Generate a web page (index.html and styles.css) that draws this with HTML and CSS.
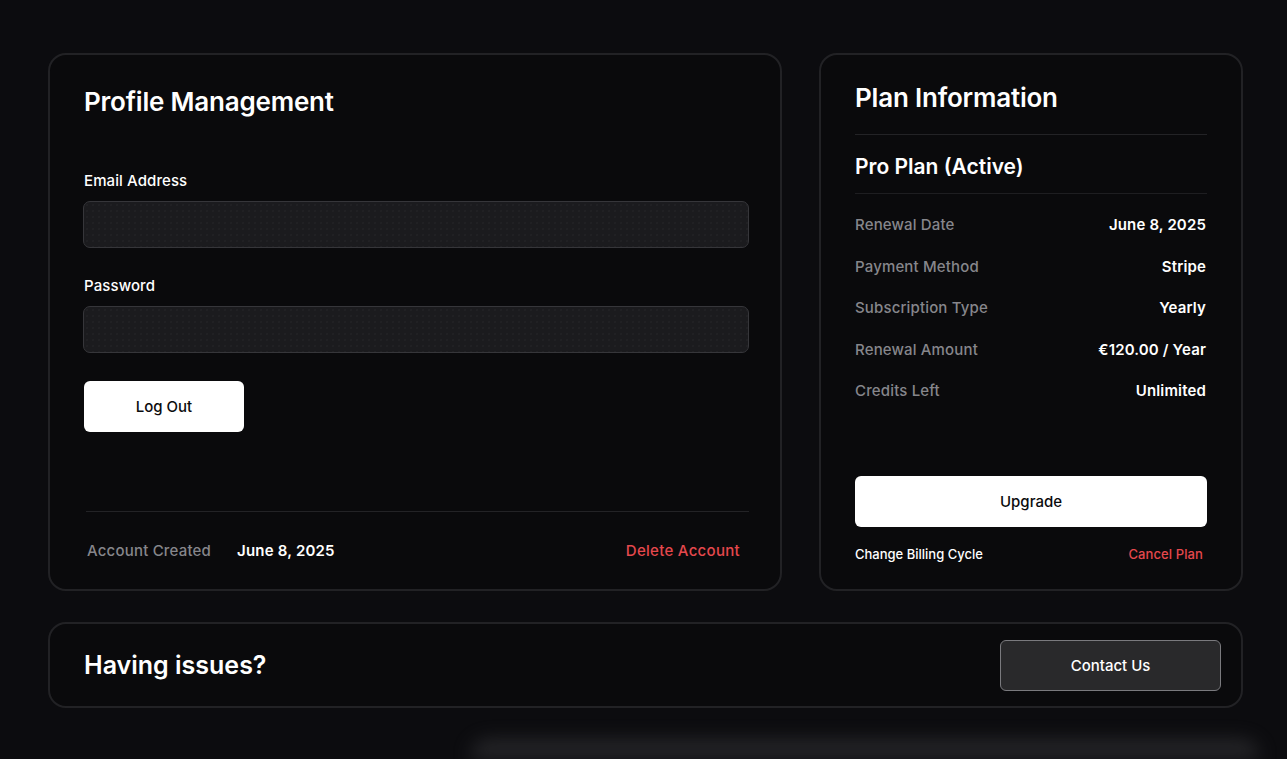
FILE: index.html
```html
<!DOCTYPE html>
<html lang="en">
<head>
<meta charset="utf-8">
<title>Account Settings</title>
<link rel="stylesheet" href="styles.css">
</head>
<body>
<div class="backdrop"></div>
<main class="page">
  <div class="top-row">
    <section class="card profile">
      <h1 class="card-title">Profile Management</h1>
      <form class="profile-form">
        <label class="field">
          <span class="field-label">Email Address</span>
          <input class="field-input" type="email">
        </label>
        <label class="field">
          <span class="field-label">Password</span>
          <input class="field-input" type="password">
        </label>
        <button type="button" class="btn btn-light logout">Log Out</button>
      </form>
      <div class="profile-footer">
        <div class="created">
          <span class="muted">Account Created</span>
          <span class="strong">June 8, 2025</span>
        </div>
        <a class="danger-link" href="#">Delete Account</a>
      </div>
    </section>

    <section class="card plan">
      <h2 class="card-title plan-title">Plan Information</h2>
      <div class="plan-name">Pro Plan (Active)</div>
      <dl class="plan-rows">
        <div class="plan-row"><dt>Renewal Date</dt><dd>June 8, 2025</dd></div>
        <div class="plan-row"><dt>Payment Method</dt><dd>Stripe</dd></div>
        <div class="plan-row"><dt>Subscription Type</dt><dd>Yearly</dd></div>
        <div class="plan-row"><dt>Renewal Amount</dt><dd>€120.00 / Year</dd></div>
        <div class="plan-row"><dt>Credits Left</dt><dd>Unlimited</dd></div>
      </dl>
      <button type="button" class="btn btn-light upgrade">Upgrade</button>
      <div class="plan-links">
        <a class="plain-link" href="#">Change Billing Cycle</a>
        <a class="danger-link small" href="#">Cancel Plan</a>
      </div>
    </section>
  </div>

  <section class="card support">
    <h2 class="support-title">Having issues?</h2>
    <button type="button" class="btn btn-dark">Contact Us</button>
  </section>
</main>
</body>
</html>
```

FILE: styles.css
```css
* {
  box-sizing: border-box;
}

html, body {
  height: 100%;
}

body {
  margin: 0;
  background: #0c0c0f;
  color: #ffffff;
  font-family: Inter, "Noto Sans", "Liberation Sans", sans-serif;
  overflow: hidden;
  position: relative;
}

/* soft blurred panel glowing under the page content */
.backdrop {
  position: absolute;
  left: 470px;
  bottom: 0;
  width: 790px;
  height: 20px;
  border-radius: 24px 24px 0 0;
  background: #2a2a2d;
  filter: blur(9px);
  opacity: 0.85;
}

.page {
  position: relative;
  padding: 53px 44px 0 48px;
  display: flex;
  flex-direction: column;
  gap: 31px;
}

.top-row {
  display: grid;
  grid-template-columns: 734px 424px;
  gap: 37px;
  height: 538px;
}

.card {
  background: #0a0a0c;
  border: 2px solid #222225;
  border-radius: 18px;
}

.card-title {
  margin: 0;
  font-size: 26px;
  font-weight: 600;
  letter-spacing: -0.2px;
  line-height: 32px;
}

/* profile card */
.profile {
  display: flex;
  flex-direction: column;
  padding: 31px 31px 0 34px;
}

.profile-form {
  display: flex;
  flex-direction: column;
  margin-top: 54px;
}

.field {
  display: flex;
  flex-direction: column;
  gap: 11px;
  margin-bottom: 29px;
}

.field-label {
  font-size: 15px;
  font-weight: 500;
  line-height: 18px;
  letter-spacing: 0.1px;
}

.field-input {
  height: 47px;
  margin-left: -1px;
  background-color: #1b1b1e;
  background-image: radial-gradient(circle, #26262a 0.6px, transparent 0.8px);
  background-size: 6px 6px;
  border: 1px solid #36363a;
  border-radius: 7px;
  color: #fff;
  font: inherit;
  outline: none;
}

.btn {
  font-family: inherit;
  font-size: 15px;
  font-weight: 500;
  border-radius: 6px;
  cursor: pointer;
}

.btn-light {
  background: #ffffff;
  color: #0b0b0d;
  border: none;
}

.logout {
  width: 160px;
  height: 51px;
  margin-top: -1px;
}

.profile-footer {
  margin-top: auto;
  margin-left: 2px;
  border-top: 1px solid #232326;
  height: 78px;
  display: flex;
  align-items: center;
  justify-content: space-between;
  padding: 0 9px 0 1px;
}

.created {
  display: flex;
  gap: 26px;
  font-size: 15px;
  letter-spacing: 0.2px;
}

.muted {
  color: #86868b;
  font-weight: 500;
}

.strong {
  color: #ffffff;
  font-weight: 600;
}

.danger-link {
  color: #e5484d;
  font-size: 15px;
  font-weight: 500;
  letter-spacing: 0.3px;
  text-decoration: none;
}

.danger-link.small {
  font-size: 13px;
  letter-spacing: 0.1px;
}

/* plan card */
.plan {
  display: flex;
  flex-direction: column;
  padding: 27px 34px 0 34px;
}

.plan-title {
  padding-bottom: 20px;
  border-bottom: 1px solid #232326;
}

.plan-name {
  font-size: 21px;
  font-weight: 600;
  line-height: 26px;
  padding: 19px 0 13px;
  border-bottom: 1px solid #1e1e21;
}

.plan-rows {
  margin: 10px 0 0;
  display: flex;
  flex-direction: column;
}

.plan-row {
  display: flex;
  justify-content: space-between;
  align-items: center;
  height: 41.5px;
  font-size: 15px;
  letter-spacing: 0.15px;
}

.plan-row dt {
  color: #86868b;
  font-weight: 500;
}

.plan-row dd {
  margin: 0;
  font-weight: 600;
  padding-right: 1px;
}

.upgrade {
  margin-top: 64px;
  height: 51px;
  width: 100%;
}

.plan-links {
  display: flex;
  justify-content: space-between;
  padding: 0 4px 0 0;
  margin-top: 19px;
}

.plain-link {
  color: #ffffff;
  font-size: 13px;
  font-weight: 500;
  text-decoration: none;
}

/* support strip */
.support {
  height: 86px;
  display: flex;
  align-items: center;
  justify-content: space-between;
  padding: 0 20px 0 34px;
}

.support-title {
  margin: 0;
  font-size: 25px;
  font-weight: 600;
}

.btn-dark {
  width: 221px;
  height: 51px;
  background: #29292b;
  color: #ffffff;
  border: 1px solid #7a7a7e;
}
```
